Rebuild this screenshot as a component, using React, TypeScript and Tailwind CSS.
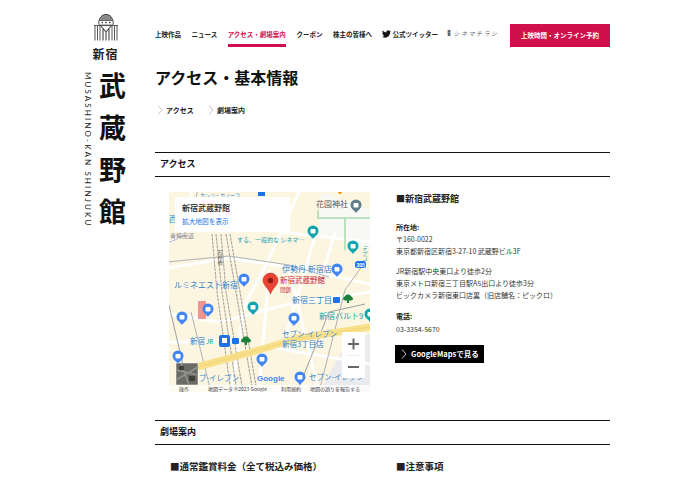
import { ReactNode } from "react";

const navItems = ["上映作品", "ニュース", "アクセス・劇場案内", "クーポン", "株主の皆様へ"];

const Chevron = ({ className }: { className?: string }) => (
  <svg width="6" height="10" viewBox="0 0 6 10" fill="none" className={className}>
    <path d="M1 0.5 L5 5 L1 9.5" stroke="currentColor" strokeWidth="0.8" />
  </svg>
);

const TwitterBird = () => (
  <svg width="9" height="8" viewBox="0 0 24 20" fill="#111">
    <path d="M24 2.4c-.9.4-1.8.7-2.8.8 1-.6 1.8-1.6 2.2-2.7-1 .6-2 1-3.1 1.2C19.300.7 18 0 16.600 0c-2.700 0-4.900 2.200-4.900 4.900 0 .4 0 .8.100 1.100C7.700 5.800 4.100 3.900 1.700.9 1.200 1.600 1 2.500 1 3.400c0 1.700.9 3.200 2.200 4.100-.8 0-1.600-.2-2.200-.6v.1c0 2.400 1.700 4.400 3.900 4.800-.4.100-.8.200-1.300.2-.3 0-.6 0-.9-.1.600 2 2.400 3.400 4.600 3.400-1.700 1.300-3.800 2.100-6.100 2.100-.4 0-.8 0-1.200-.1C2.200 19.300 4.800 20 7.500 20c9.100 0 14-7.500 14-14v-.6c1-.7 1.800-1.600 2.500-2.600z" />
  </svg>
);

const Logo = () => (
  <svg width="26" height="27" viewBox="0 0 26 27" fill="none" stroke="#444" strokeWidth="1">
    <path d="M6 10 C6 3 9 0.500 13 0.500 C17 0.500 20 3 20 10" fill="#8a8a8a" />
    <rect x="6" y="6.500" width="14" height="4.500" fill="#fff" strokeWidth="0.7" />
    <path d="M8.500 8.500h1.500M12.200 8.500h1.500M16 8.500h1.500" strokeWidth="1.300" />
    <path d="M1 11.500h24M2 12v14.500M4.500 12v14.500M7 12v14.500M19 12v14.500M21.500 12v14.500M24 12v14.500" strokeWidth="0.9" />
    <path d="M8 12 L13 18 L18 12 M10 15 V26.500 M16 15 V26.500 M13 18 V26.500" strokeWidth="1.100" />
  </svg>
);

const Pin = ({ x, y, color, tint = "#fff" }: { x: number; y: number; color: string; tint?: string }) => (
  <g transform={`translate(${x} ${y})`}>
    <path d="M0 7 C-1.500 4.500 -5.500 2.500 -5.500 -1 A5.500 5.500 0 1 1 5.500 -1 C5.500 2.500 1.500 4.500 0 7 Z" fill={color} />
    <rect x="-2.500" y="-3" width="5" height="4.500" rx="1" fill={tint} />
  </g>
);

const Tree = ({ x, y }: { x: number; y: number }) => (
  <g transform={`translate(${x} ${y})`} fill="#188038">
    <path d="M-5 1 C-5 -1 -3 -1.500 -2.500 -2.500 C-2 -4 2 -4 2.500 -2.500 C3 -1.500 5 -1 5 1 C5 2.500 3 2.500 1 2.500 L1 5 H-1 L-1 2.500 C-3 2.500 -5 2.500 -5 1 Z" />
  </g>
);

const MapLabel = ({ x, y, size = 8, fill = "#2f7dc0", children }: { x: number; y: number; size?: number; fill?: string; children: ReactNode }) => (
  <text x={x} y={y} fontSize={size} fill={fill} stroke="#fff" strokeWidth="0.25" paintOrder="stroke">
    {children}
  </text>
);

const MapDrawing = () => (
  <svg width="201" height="200" viewBox="0 0 201 200" className="block" fontFamily="'Noto Sans CJK JP', sans-serif">
    <rect width="201" height="200" fill="#fcf6e1" />
    <path d="M150 200 L178 150 L201 142 V200 Z" fill="#e9ebee" />
    <path d="M152 0 L201 18 V58 L150 42 Z" fill="#f8f8f4" />
    <g stroke="#fff" fill="none" strokeWidth="3">
      <path d="M130 0 L96 75 L76 112 L62 200" />
      <path d="M-2 76 L60 66 L120 75 L201 92" />
      <path d="M0 50 C20 42 24 25 22 0" />
      <path d="M112 40 L201 50" />
      <path d="M100 78 L90 200" />
      <path d="M120 76 L150 200" />
      <path d="M146 44 L118 140" />
      <path d="M0 122 L50 130 L120 112 L201 100" />
      <path d="M166 40 L150 95" />
      <path d="M0 150 L46 150" />
      <path d="M100 155 L201 172" />
    </g>
    <g stroke="#9aa0a6" fill="none">
      <path d="M-2 70 L60 64 L120 73 L160 85" strokeWidth="0.8" />
      <path d="M28 0 C24 30 20 45 0 50" strokeWidth="0.8" />
      <path d="M0 113 L18 190" strokeWidth="1" />
      <path d="M196 112 L160 120 L128 200" strokeWidth="1" />
      <path d="M196 70 L176 98 L150 200" strokeWidth="0.8" />
      <path d="M22 120 L42 200" strokeWidth="0.8" />
    </g>
    <g stroke="#a8a59c" fill="none" strokeWidth="1.100" strokeDasharray="3 0.8">
      <path d="M43 42 L48 100 L62 200" />
      <path d="M47 42 L53 100 L68 200" />
      <path d="M52 42 L57 100 L74 200" />
      <path d="M57 42 L67 100 L84 200" />
      <path d="M61 42 L71 100 L88 200" />
    </g>
    <path d="M28 175 L90 158 L130 146 L176 139 L201 135" stroke="#f8e08a" strokeWidth="7" fill="none" />
    <path d="M28 175 L90 158 L130 146 L176 139 L201 135" stroke="#e2c566" strokeWidth="0.4" fill="none" />
    <path d="M149 18 V26 H201 M176 26 V58" stroke="#a8dcae" strokeWidth="1.500" fill="none" />
    <rect x="29" y="109" width="8" height="18" fill="#f0958f" />

    <MapLabel x={31} y={4.500} size={5}>カンジ・カノーラ</MapLabel>
    <MapLabel x={0} y={30}>西</MapLabel>
    <MapLabel x={1} y={46} size={6} fill="#777">青梅街道</MapLabel>
    <MapLabel x={147} y={15} size={8} fill="#555">花園神社</MapLabel>
    <MapLabel x={95} y={36} size={8} fill="#1a9aa0">リー</MapLabel>
    <MapLabel x={68} y={50} size={6} fill="#1a9aa0">する、一般的な シネマ…</MapLabel>
    <text x={196} y={54} fontSize="5" fill="#1a9aa0" writingMode="vertical-rl">デプコ</text>
    <text x={51} y={58} fontSize="5" fill="#666" writingMode="vertical-rl">石神橋</text>
    <MapLabel x={113} y={80} size={8}>伊勢丹 新宿店</MapLabel>
    <MapLabel x={5} y={96} size={8}>ルミネエスト新宿</MapLabel>
    <MapLabel x={111} y={91} size={7.500} fill="#c5221f">新宿武蔵野館</MapLabel>
    <MapLabel x={111} y={100} size={5.500} fill="#c5221f">閉鎖</MapLabel>
    <MapLabel x={123} y={111} size={8}>新宿三丁目</MapLabel>
    <MapLabel x={150} y={127} size={8} fill="#1a9aa0">新宿バルト9</MapLabel>
    <MapLabel x={113} y={145} size={7.500}>セブン-イレブン</MapLabel>
    <MapLabel x={113} y={155} size={7.500}>新宿3丁目店</MapLabel>
    <MapLabel x={21} y={152} size={7.500}>新宿</MapLabel>
    <MapLabel x={37} y={152} size={6} fill="#0a8a3c">JR</MapLabel>
    <MapLabel x={140} y={188} size={7.500}>セブン-イレブン</MapLabel>
    <MapLabel x={30} y={189} size={7.500}>ブ-イレブン</MapLabel>
    <text x={88} y={189} fontSize="8" fontWeight="700" fill="#4285f4" fontFamily="'Liberation Sans', sans-serif">
      Google
    </text>

    <rect x="89" y="0" width="7" height="4" fill="#1a73e8" />
    <circle cx="171" cy="0" r="2" fill="#f29900" />
    <Pin x={187} y={14} color="#607d8b" />
    <Pin x={144} y={40} color="#12a5ad" />
    <Pin x={184} y={55} color="#12a5ad" />
    <Pin x={168} y={78} color="#4285f4" />
    <Pin x={75} y={88} color="#4285f4" />
    <Pin x={84} y={116} color="#12a5ad" />
    <Pin x={39} y={118} color="#4285f4" />
    <Pin x={13} y={126} color="#4285f4" />
    <Pin x={125} y={127} color="#4285f4" />
    <Pin x={93} y={168} color="#4285f4" />
    <Pin x={9} y={165} color="#4285f4" />
    <Pin x={131} y={186} color="#4285f4" />
    <Pin x={201} y={123} color="#12a5ad" />

    <rect x="186" y="69" width="11" height="7" rx="2.500" fill="#1a73e8" />
    <text x="187.500" y="74.800" fontSize="5" fontWeight="700" fill="#fff" fontFamily="'Liberation Sans', sans-serif">305</text>

    <rect x="50" y="143" width="11" height="12" rx="2" fill="#1a73e8" />
    <rect x="53" y="146" width="5" height="5" fill="#fff" />
    <rect x="63" y="146" width="7" height="6" rx="1" fill="#1a73e8" />
    <rect x="164" y="105" width="7" height="6" rx="1" fill="#1a73e8" />
    <Tree x={77} y={148} />
    <Tree x={179} y={106} />

    {/* 赤ピン */}
    <path d="M101.500 102 C100 97 94 93 94 88.500 A7.500 7.500 0 1 1 109 88.500 C109 93 103 97 101.500 102 Z" fill="#ea4335" stroke="#b3261e" strokeWidth="0.5" />
    <circle cx="101.500" cy="88.500" r="2.700" fill="#8c1c13" />

    {/* 衛星 */}
    <rect x="7" y="171" width="22" height="22" fill="#6b6b66" stroke="#fff" strokeWidth="0.5" />
    <path d="M7 178 L29 183 M12 171 L20 193 M7 188 L29 175" stroke="#92928c" strokeWidth="1.500" />
    <path d="M10 174h5v4h-5zM20 184h6v5h-6z" fill="#3f3f3c" />

    {/* 帰属 */}
    <rect x="40" y="193" width="161" height="7" fill="#fff" fillOpacity="0.75" />
    <rect x="0" y="193" width="40" height="7" fill="#fff" fillOpacity="0.5" />
    <text y="199" fontSize="5" fill="#444">
      <tspan x="10">操作</tspan>
      <tspan x="39">地図データ ©2023 Google</tspan>
      <tspan x="112">利用規約</tspan>
      <tspan x="141">地図の誤りを報告する</tspan>
    </text>

    {/* 拡大縮小 */}
    <rect x="173" y="140" width="23" height="46" fill="#fff" />
    <path d="M178 163.500 H191" stroke="#e6e6e6" strokeWidth="0.6" />
    <path d="M179 152 H190 M184.500 146.500 V157.500 M179 175 H190" stroke="#666" strokeWidth="2" />

    {/* 情報パネル */}
    <rect x="6" y="5" width="115" height="35" fill="#fff" />
    <text x="13" y="19" fontSize="8" fontWeight="500" fill="#222">新宿武蔵野館</text>
    <text x="13" y="32" fontSize="6.700" fill="#1a73e8">拡大地図を表示</text>
  </svg>
);

const SectionHeading = ({ children }: { children: ReactNode }) => (
  <h2 className="h-[25px] border-y border-[#111] pl-[5px] text-[9px] leading-[21px] font-bold text-[#111]">{children}</h2>
);

export default function App() {
  return (
    <div className="flex h-[480px] w-[680px] overflow-hidden bg-white text-[#222] font-['Noto_Sans_CJK_JP','Noto_Sans_CJK_SC',sans-serif]">
      <aside className="w-[155px] shrink-0 pt-[14px] pl-[84px]">
        <div className="flex w-[43px] flex-col items-center">
          <Logo />
          <div className="mt-[5px] text-[12px] leading-[16px] font-bold tracking-[1px] text-[#222]">新宿</div>
        </div>
        <div className="mt-[10px] flex gap-[7px]">
          <div className="[writing-mode:vertical-rl] h-[152px] w-[8px] text-[8px] leading-[8px] tracking-[2.1px] text-[#222] font-['Lato',sans-serif] whitespace-nowrap">
            MUSASHINO-KAN SHINJUKU
          </div>
          <div className="flex flex-col gap-[16px] text-[27px] leading-[26px] font-bold text-[#111]">
            <span>武</span>
            <span>蔵</span>
            <span>野</span>
            <span>館</span>
          </div>
        </div>
      </aside>

      <main className="w-[455px] shrink-0">
        <header className="flex h-[47px] items-start pt-[24px]">
          <nav className="flex items-start gap-[10.500px] text-[6.500px] font-bold leading-[20px] text-[#222]">
            {navItems.map((item) => (
              <a
                key={item}
                className={item === "アクセス・劇場案内" ? "h-[23px] border-b-[3px] border-[#d0104c] text-[#d0104c]" : ""}
              >
                {item}
              </a>
            ))}
            <a className="flex h-[20px] items-center gap-[1px]">
              <TwitterBird />
              公式ツイッター
            </a>
            <a className="ml-[-1px] flex h-[20px] items-center gap-[3px] font-normal text-[#666]">
              <span className="w-[3px] text-[3px] leading-[3px] font-bold text-[#222]">映画</span>
              <span className="text-[6px] italic tracking-[1.500px]">シネマチラシ</span>
            </a>
          </nav>
          <a className="ml-auto flex h-[23px] w-[100px] items-center justify-center bg-[#d0104c] text-[6.500px] font-bold text-white">
            上映時間・オンライン予約
          </a>
        </header>

        <h1 className="mt-[18px] text-[16px] leading-[24px] font-bold text-[#111]">アクセス・基本情報</h1>

        <div className="mt-[14px] flex h-[14px] items-center text-[7px] font-bold text-[#222]">
          <a className="flex w-[53px] items-center gap-[3px] pl-[2px]">
            <Chevron className="text-[#c9a9b2]" />
            アクセス
          </a>
          <a className="flex items-center gap-[3px]">
            <Chevron className="text-[#c9a9b2]" />
            劇場案内
          </a>
        </div>

        <section className="mt-[35px]">
          <SectionHeading>アクセス</SectionHeading>
          <div className="mt-[15px] flex h-[228px]">
            <div className="ml-[14px] w-[201px]">
              <MapDrawing />
            </div>
            <div className="ml-[26px] flex-1 text-[7px] leading-[12px] text-[#333]">
              <h3 className="mt-[1px] text-[9px] leading-[12px] font-bold text-[#222]">■新宿武蔵野館</h3>
              <div className="mt-[16px] font-bold text-[#222]">所在地:</div>
              <p>〒160-0022</p>
              <p>東京都新宿区新宿3-27-10 武蔵野ビル3F</p>
              <p className="mt-[8px]">JR新宿駅中央東口より徒歩2分</p>
              <p>東京メトロ新宿三丁目駅A5出口より徒歩3分</p>
              <p>ビックカメラ新宿東口店裏（旧店舗名：ピックロ）</p>
              <div className="mt-[9px] font-bold text-[#222]">電話:</div>
              <p className="mt-[1px]">03-3354-5670</p>
              <a className="mt-[10px] -ml-[1px] flex h-[18px] w-[89px] items-center gap-[4px] bg-black pl-[6px] text-[7.500px] font-bold text-white">
                <Chevron className="text-white" />
                GoogleMapsで見る
              </a>
            </div>
          </div>
        </section>

        <section>
          <SectionHeading>劇場案内</SectionHeading>
          <div className="mt-[15px] flex text-[9.500px] leading-[12px] font-bold text-[#222]">
            <h3 className="ml-[15px] w-[226px]">■通常鑑賞料金（全て税込み価格）</h3>
            <h3>■注意事項</h3>
          </div>
        </section>
      </main>
    </div>
  );
}
